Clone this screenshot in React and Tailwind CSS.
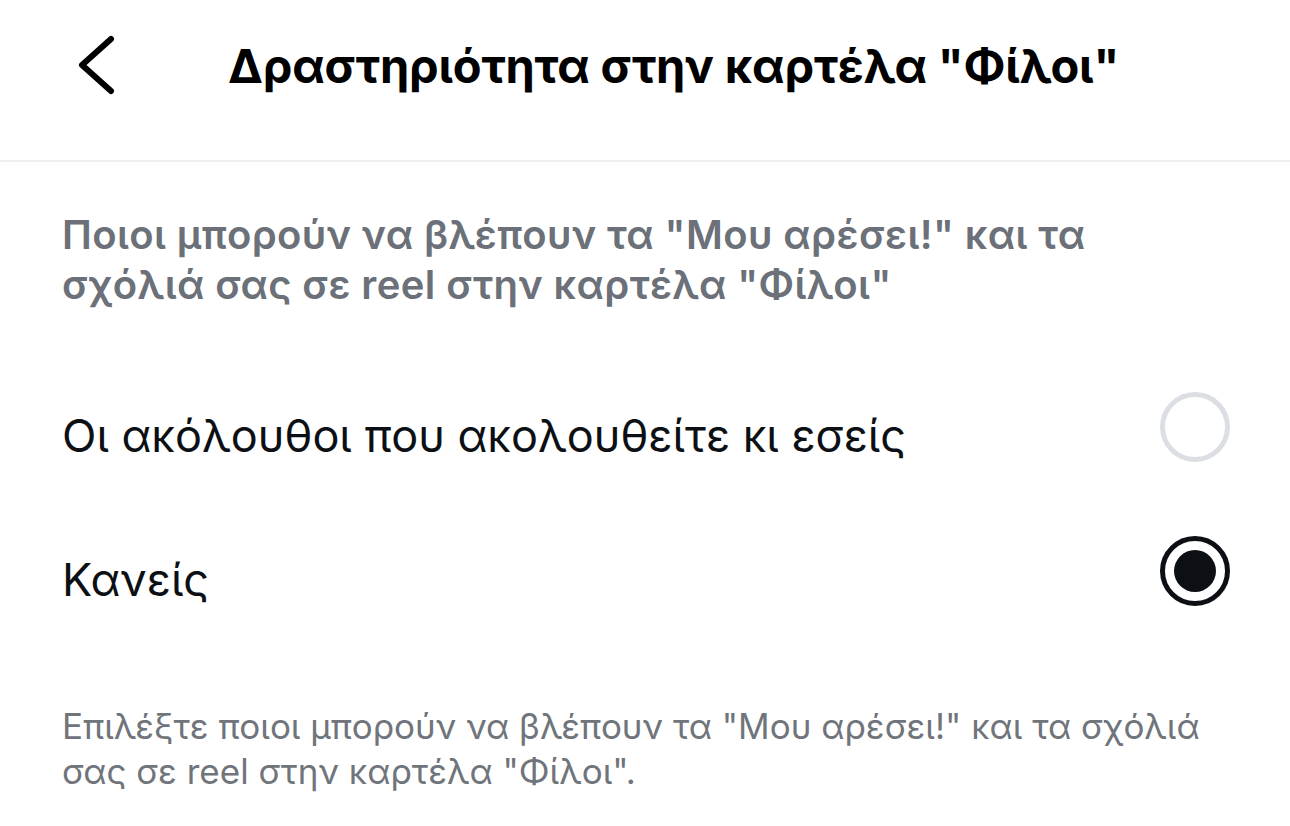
import React, { useState } from 'react';

const options = [
  { id: 'mutual', label: 'Οι ακόλουθοι που ακολουθείτε κι εσείς' },
  { id: 'none', label: 'Κανείς' },
];

const Radio = ({ checked }) =>
  checked ? (
    <span className="mb-[11px] flex h-[70px] w-[70px] items-center justify-center rounded-full border-[5px] border-[#0c1014]">
      <span className="h-[42px] w-[42px] rounded-full bg-[#0c1014]" />
    </span>
  ) : (
    <span className="mb-[11px] block h-[70px] w-[70px] rounded-full border-[5px] border-[#dbdfe4]" />
  );

export default function App() {
  const [selected, setSelected] = useState('none');

  return (
    <div className="h-[826px] w-full overflow-hidden bg-white font-['Inter','Noto_Sans',sans-serif] text-[#0c1014]">
      {/* Header */}
      <header className="flex h-[162px] items-center border-b-2 border-[#efefef] pb-[30px]">
        <button className="ml-[74px] shrink-0" aria-label="Πίσω">
          <svg width="44" height="64" viewBox="0 0 44 64" fill="none">
            <path
              d="M37 6 L8 32 L37 58"
              stroke="#000"
              strokeWidth="6"
              strokeLinecap="round"
              strokeLinejoin="round"
            />
          </svg>
        </button>
        <h1 className="ml-[110px] text-[47px] font-bold leading-none tracking-[-0.2px] text-black">
          Δραστηριότητα στην καρτέλα "Φίλοι"
        </h1>
      </header>

      {/* Section title */}
      <p className="px-[62px] pt-[48px] text-[40px] font-semibold leading-[50px] tracking-[0.4px] text-[#6b7079]">
        Ποιοι μπορούν να βλέπουν τα "Μου αρέσει!" και τα
        <br />
        σχόλιά σας σε reel στην καρτέλα "Φίλοι"
      </p>

      {/* Options */}
      <div className="mt-[50px]">
        {options.map((o) => (
          <button
            key={o.id}
            onClick={() => setSelected(o.id)}
            className="flex h-[144px] w-full items-center justify-between pl-[62px] pr-[60px] text-left"
          >
            <span className="pt-[6px] text-[45px] leading-none">{o.label}</span>
            <Radio checked={selected === o.id} />
          </button>
        ))}
      </div>

      {/* Footer note */}
      <p className="mt-[56px] px-[62px] text-[35px] leading-[45px] text-[#70747b]">
        Επιλέξτε ποιοι μπορούν να βλέπουν τα "Μου αρέσει!" και τα σχόλιά
        <br />
        σας σε reel στην καρτέλα "Φίλοι".
      </p>
    </div>
  );
}
